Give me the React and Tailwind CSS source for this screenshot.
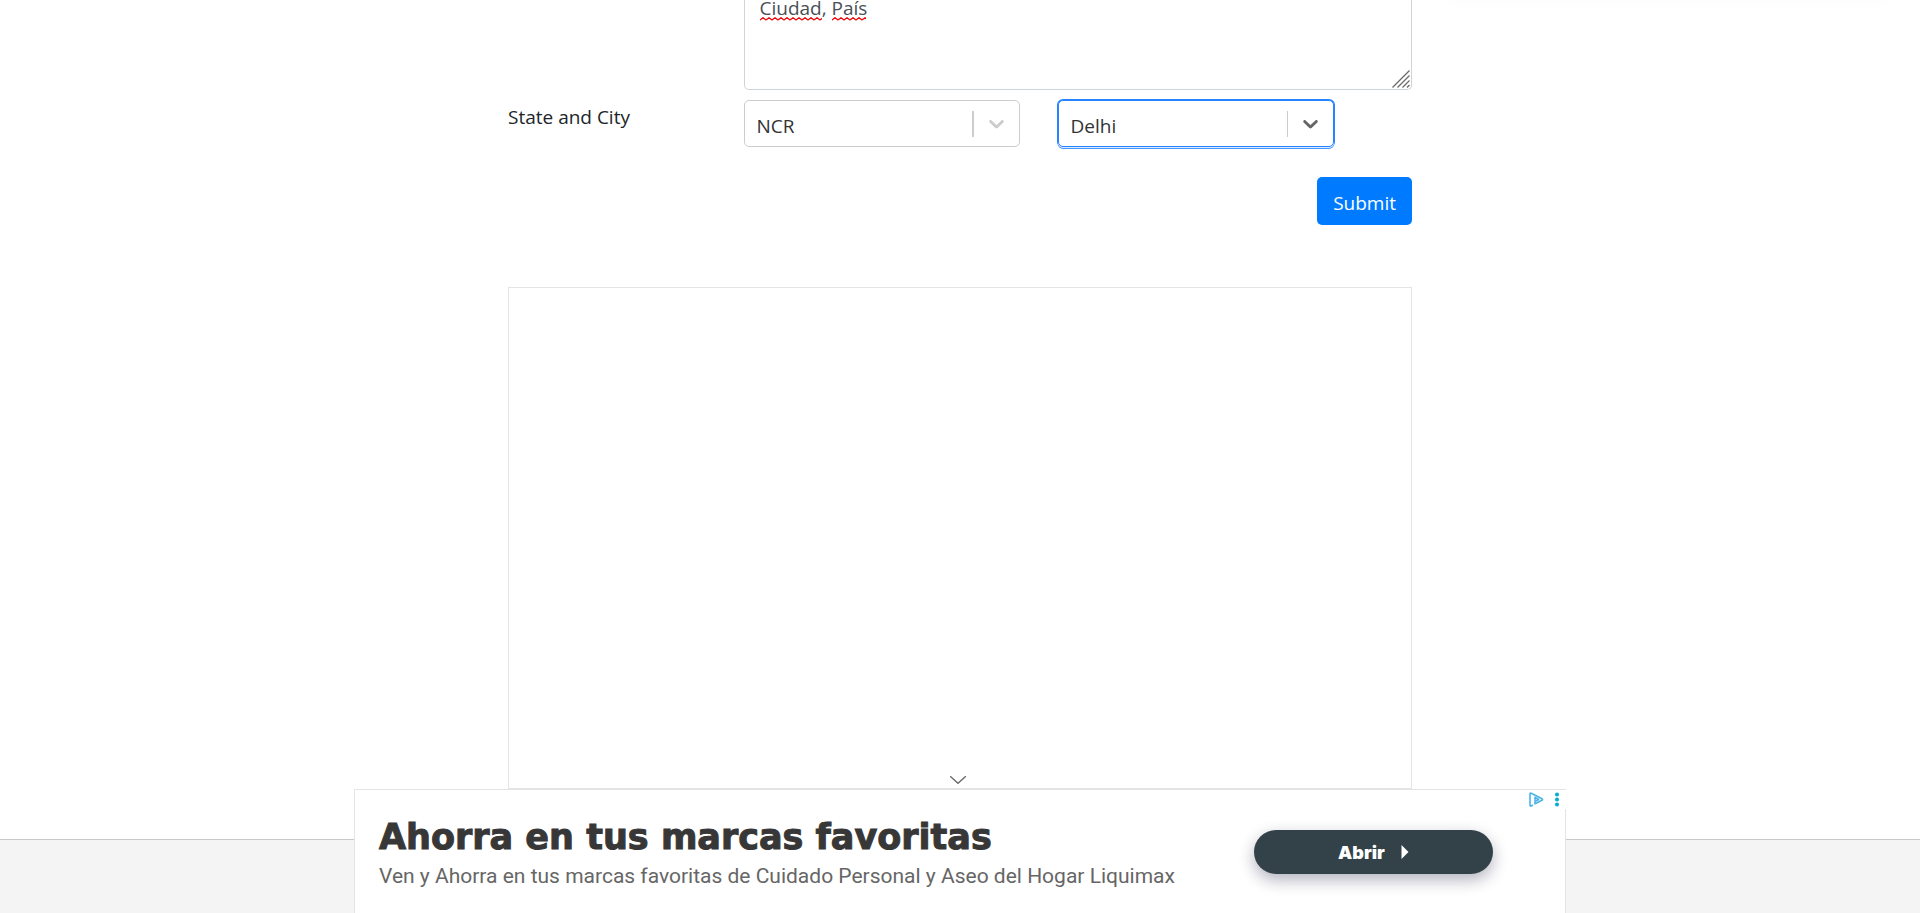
import React from "react";

function Squiggle({ id, className }) {
  return (
    <svg aria-hidden="true" className={className} height="4">
      <defs>
        <pattern id={id} width="6" height="4" patternUnits="userSpaceOnUse">
          <path d="M-1 3.5L0 2.9L3 .7L6 2.9L7 3.5" fill="none" stroke="#f00000" strokeWidth="1.2" />
        </pattern>
      </defs>
      <rect width="100%" height="4" fill={`url(#${id})`} />
    </svg>
  );
}

function Chevron({ className }) {
  return (
    <svg aria-hidden="true" viewBox="0 0 20 20" className={className} fill="currentColor">
      <path d="M4.516 7.548c0.436-0.446 1.043-0.481 1.576 0l3.908 3.747 3.908-3.747c0.533-0.481 1.141-0.446 1.574 0 0.436 0.445 0.408 1.197 0 1.615-0.406 0.418-4.695 4.502-4.695 4.502-0.217 0.223-0.502 0.335-0.787 0.335s-0.57-0.112-0.789-0.335c0 0-4.287-4.084-4.695-4.502s-0.436-1.17 0-1.615z" />
    </svg>
  );
}

function SelectBox({ label, value, options, active }) {
  return (
    <div className="relative">
      <select
        aria-label={label}
        defaultValue={value}
        className={`block h-[47px] w-full appearance-none rounded-[5px] border bg-white pt-[6px] pl-3 pr-16 text-[19px] text-[#333] outline-none ${
          active
            ? "border-[#2684ff] shadow-[0_1px_0_0_#d9e9ff,0_2px_0_0_#4797ff,0_0_0_1px_#2684ff]"
            : "border-[#ccc]"
        }`}
      >
        {options.map((o) => (
          <option key={o}>{o}</option>
        ))}
      </select>
      <div className="pointer-events-none absolute inset-y-0 right-0 flex items-center pr-[11px]">
        <span className={`mr-[10px] h-[26px] bg-[#ccc] ${active ? "w-px" : "w-[2px]"}`} />
        <Chevron className={`size-[25px] ${active ? "text-[#666]" : "text-[#ccc]"}`} />
      </div>
    </div>
  );
}

function Ad() {
  return (
    <aside className="fixed inset-x-0 bottom-0 mx-auto h-[124px] w-full max-w-[1212px] border border-b-0 border-[#e4e4e4] bg-white">
      <button aria-label="Ocultar anuncio" className="absolute -top-4 left-1/2 -ml-[11px] flex h-[12px] w-[18px] items-center justify-center">
        <svg viewBox="0 0 18 10" className="h-[10px] w-[18px]" fill="none" stroke="#6b6b6b" strokeWidth="1.4">
          <path d="M1.2 1.2L9 8.2L16.8 1.2" />
        </svg>
      </button>
      <div className="flex h-full items-start justify-between pl-6 pr-[72px]">
        <div className="pt-6">
          <h2 className="font-['DejaVu_Sans',sans-serif] text-[35px] leading-[46px] font-bold whitespace-nowrap text-[#373737] [-webkit-text-stroke:1px_#373737]">
            Ahorra en tus marcas favoritas
          </h2>
          <p className="font-['Roboto',sans-serif] text-[21px] leading-[32px] text-[#666]">
            Ven y Ahorra en tus marcas favoritas de Cuidado Personal y Aseo del Hogar Liquimax
          </p>
        </div>
        <a
          href="#abrir"
          className="mt-10 flex h-11 w-[239px] shrink-0 items-center justify-center gap-4 rounded-full bg-[#334148] font-['Inter',sans-serif] text-[18px] font-black text-white shadow-[0_6px_16px_rgba(20,20,60,0.32)]"
        >
          Abrir
          <svg aria-hidden="true" viewBox="0 0 8 14" className="h-[14px] w-2" fill="currentColor">
            <path d="M.5 0L7.5 7L.5 14Z" />
          </svg>
        </a>
      </div>
      <div className="absolute top-0 -right-px flex h-[19px] items-center gap-[10px] bg-white pr-[6px]">
        <svg aria-label="Gestión de anuncios" viewBox="0 0 15 15" className="size-[15px]" fill="none" stroke="#4db4e6" strokeWidth="1.6" strokeLinejoin="round">
          <path d="M4 13L2.2 14Q1 14.4 1 13V2Q1 .6 2.2 1.2L13 6.8Q14.2 7.5 13 8.2L6 11.8V5.4L9.6 7.5L7 9" />
        </svg>
        <svg aria-hidden="true" viewBox="0 0 6 15" className="h-[15px] w-[6px]" fill="#00aecd">
          <circle cx="3" cy="2.4" r="2" />
          <circle cx="3" cy="7.5" r="2" />
          <circle cx="3" cy="12.6" r="2" />
        </svg>
      </div>
    </aside>
  );
}

export default function App() {
  return (
    <div className="relative flex min-h-screen flex-col overflow-hidden bg-white font-['Open_Sans','Noto_Sans',sans-serif] text-[19px] text-[#212529]">
      <div className="pointer-events-none absolute -top-10 right-8 h-9 w-[440px] shadow-[0_0_20px_rgba(0,0,0,0.04)]" />
      <main className="mx-auto w-full max-w-[942px]">
        <form onSubmit={(e) => e.preventDefault()}>
          <div className="grid grid-cols-12">
            <div className="relative col-span-9 col-start-4 px-[19px]">
              <textarea
                aria-label="Current Address"
                spellCheck="false"
                defaultValue="Ciudad, País"
                className="block h-[90px] w-full resize-none overflow-hidden rounded-b-[5px] border border-t-0 border-[#ced4da] bg-white px-[15px] leading-[16px] text-[#495057] outline-none"
              />
              <Squiggle id="wave-a" className="absolute top-[17px] left-[35px] w-[62px]" />
              <Squiggle id="wave-b" className="absolute top-[17px] left-[107px] w-[34px]" />
              <svg aria-hidden="true" viewBox="0 0 18 18" className="pointer-events-none absolute right-[21px] bottom-[2px] size-[18px]" stroke="#6a6a6a" strokeWidth="1.3">
                <path d="M.5 17.5L17.5 .5M5.5 17.5L17.5 5.5M10.5 17.5L17.5 10.5M15 17.5L17.5 15" />
              </svg>
            </div>
          </div>
          <div className="grid grid-cols-12 pt-[10px]">
            <div className="col-span-3 px-[19px] pt-[2px] leading-[30px]">State and City</div>
            <div className="col-span-4 px-[19px]">
              <SelectBox label="State" value="NCR" options={["NCR", "Uttar Pradesh", "Haryana", "Rajasthan"]} />
            </div>
            <div className="col-span-4 px-[19px]">
              <SelectBox label="City" value="Delhi" options={["Delhi", "Gurgaon", "Noida"]} active />
            </div>
          </div>
          <div className="flex justify-end px-[19px] pt-[30px]">
            <button type="submit" className="h-12 rounded-[5px] bg-[#007bff] px-4 pt-1 text-white">
              Submit
            </button>
          </div>
        </form>
        <div className="px-[19px] pt-[62px] pb-[50px]">
          <div className="h-[502px] border border-[#e4e4e4]" />
        </div>
      </main>
      <footer className="flex-1 border-t border-[#c8c8c8] bg-[#f4f4f4]" />
      <Ad />
    </div>
  );
}
